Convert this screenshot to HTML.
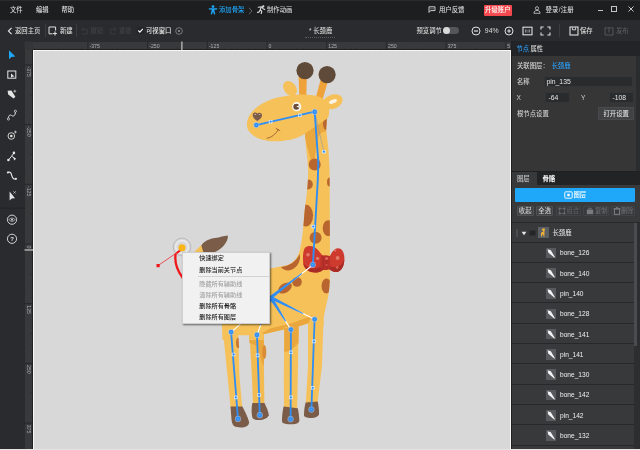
<!DOCTYPE html>
<html lang="zh-CN">
<head>
<meta charset="utf-8">
<title>骨骼动画编辑器</title>
<style>
*{margin:0;padding:0;box-sizing:border-box}
html,body{width:640px;height:450px;overflow:hidden;background:#2b2c2f}
body{position:relative;font-family:"Liberation Sans","Noto Sans CJK SC",sans-serif;font-size:6.350px;line-height:1;color:#e6e6e6;-webkit-text-size-adjust:none}
.a{position:absolute}
.t{position:absolute;white-space:nowrap;line-height:8px;height:8px;font-weight:500}
#menubar{left:0;top:0;width:640px;height:19.500px;background:#1d1e20;border-top:0.700px solid #2a2b2d}
#toolbar{left:0;top:19.500px;width:640px;height:22px;background:#2a2b2e}
#lefttools{left:0;top:41px;width:24.5px;height:409px;background:#2a2b2e}
#canvas{left:33.200px;top:50.300px;width:477.5px;height:400px;background:#d8d8d8;border:1.8px solid #f6f6f6;border-bottom:0;box-shadow:0 0 0 0.6px #151516}
#rulerh{left:24.5px;top:41.5px;width:486px;height:8.5px;background:#38393b}
#rulerv{left:24.5px;top:50px;width:8.5px;height:400px;background:#38393b}
#bottomstrip{left:0;top:449px;width:640px;height:1px;background:#e4e4e4;z-index:50}
#gap{left:510.5px;top:41px;width:2px;height:409px;background:#202123}
#rp{left:512px;top:41px;width:128px;height:409px;background:#363637}
#rphead{left:512px;top:41px;width:128px;height:15px;background:#232427}
.dim{color:#6a6b6e}
.blue{color:#2d9cf0}
.inp{position:absolute;background:#2a2b2d;border:0.5px solid #343538;border-radius:1px}
</style>
</head>
<body>
<div id="app" style="position:absolute;left:0;top:0;width:640px;height:450px;will-change:transform">
<div class="a" id="menubar"></div>
<div class="a" id="toolbar"></div>
<div class="a" id="lefttools"></div>
<div class="a" id="rulerh"></div>
<div class="a" id="rulerv"></div>
<div class="a" id="canvas"></div>
<div class="a" id="gap"></div>
<div class="a" id="rp"></div>
<div class="a" id="rphead"></div>
<div class="t" style="left:10px;top:6.100px;color:#dcdcdc">文件</div>
<div class="t" style="left:36px;top:6.100px;color:#dcdcdc">编辑</div>
<div class="t" style="left:61.5px;top:6.100px;color:#dcdcdc">帮助</div>
<svg class="a" style="left:208px;top:4.5px" width="10" height="10" viewBox="0 0 10 10"><circle cx="5" cy="1.6" r="1.4" fill="#1fa3f5"/><path d="M0.8 3.3 L9.2 3.3 L9.2 4.6 L6.3 4.8 L7.3 9.2 L6 9.4 L5 6.6 L4 9.4 L2.7 9.2 L3.7 4.8 L0.8 4.6 Z" fill="#1fa3f5"/></svg>
<div class="t" style="left:219px;top:6.100px;color:#1fa3f5">添加骨架</div>
<svg class="a" style="left:248px;top:6.5px" width="5" height="8" viewBox="0 0 5 8"><path d="M1 0.8 L4 4 L1 7.2" fill="none" stroke="#6d6e71" stroke-width="0.9"/></svg>
<svg class="a" style="left:256.5px;top:5px" width="9" height="9" viewBox="0 0 9 9"><circle cx="6.3" cy="1.3" r="1.1" fill="#e0e0e0"/><path d="M1.2 2.2 L5 1.8 L6 3.8 L7.8 4.4 M4.2 2.2 L3.2 5 L4.8 6.2 L4.2 8.6 M3.2 5 L1.8 7.2 L0.5 7.4" fill="none" stroke="#e0e0e0" stroke-width="1.1" stroke-linecap="round" stroke-linejoin="round"/></svg>
<div class="t" style="left:267px;top:6.100px;color:#d4d4d4">制作动画</div>
<svg class="a" style="left:427.5px;top:5.5px" width="8" height="8" viewBox="0 0 8 8"><path d="M1 0.8 L7 0.8 L7 4.6 L2.6 4.6 L1 6.4 Z" fill="none" stroke="#e0e0e0" stroke-width="0.9"/><path d="M3 2.2 L3 3.4 M5 2.2 L5 3.4" stroke="#e0e0e0" stroke-width="0.7"/></svg>
<div class="t" style="left:439px;top:6.100px;color:#dcdcdc">用户反馈</div>
<div class="a" style="left:483.5px;top:4.5px;width:28.5px;height:11px;background:#f4494e;border-radius:1px"></div>
<div class="t" style="left:485px;top:6px;color:#fff;font-size:6.4px">升级账户</div>
<svg class="a" style="left:533px;top:5.5px" width="8" height="8" viewBox="0 0 8 8"><circle cx="4" cy="2.3" r="1.6" fill="none" stroke="#d0d0d0" stroke-width="0.8"/><path d="M0.9 7.3 C0.9 5.2 2.4 4.4 4 4.4 C5.6 4.4 7.1 5.2 7.1 7.3 Z" fill="none" stroke="#d0d0d0" stroke-width="0.8"/></svg>
<div class="t" style="left:545.500px;top:6.100px;color:#dcdcdc;letter-spacing:0.250px">登录/注册</div>
<div class="a" style="left:597.500px;top:9.5px;width:5px;height:1px;background:#c4c4c4"></div>
<div class="a" style="left:611px;top:6px;width:6px;height:6px;border:1px solid #c4c4c4"></div>
<svg class="a" style="left:627.5px;top:6px" width="6" height="6" viewBox="0 0 6 6"><path d="M0.5 0.5 L5.5 5.5 M5.5 0.5 L0.5 5.5" stroke="#d8d8d8" stroke-width="0.9"/></svg>
<!--MENUBAR-->
<svg class="a" style="left:7px;top:26.5px" width="6" height="8" viewBox="0 0 6 8"><path d="M4.6 0.8 L1.4 4 L4.6 7.2" fill="none" stroke="#e6e6e6" stroke-width="1.1"/></svg>
<div class="t" style="left:15px;top:27px;color:#dcdcdc">返回主页</div>
<div class="a" style="left:44.5px;top:24px;width:0.5px;height:13px;background:#3c3d40"></div>
<svg class="a" style="left:48px;top:25.5px" width="10" height="10" viewBox="0 0 10 10"><path d="M7.6 4.6 L7.6 1 L1 1 L1 7.8 L4.6 7.8" fill="none" stroke="#e0e0e0" stroke-width="1"/><path d="M7 5.6 L7 9.4 M5.1 7.5 L8.9 7.5" stroke="#e0e0e0" stroke-width="1.1"/></svg>
<div class="t" style="left:60px;top:27px;color:#dcdcdc">新建</div>
<div class="a" style="left:75.5px;top:24px;width:0.5px;height:13px;background:#3c3d40"></div>
<svg class="a" style="left:81px;top:26.5px" width="7" height="8" viewBox="0 0 7 8"><path d="M2.6 0.6 L0.8 2.2 L2.6 3.8 M0.8 2.2 L6.2 2.2 L6.2 7 L0.8 7" fill="none" stroke="#3f4043" stroke-width="0.8"/></svg>
<div class="t dim" style="left:90.5px;top:27px;color:#404144">撤销</div>
<svg class="a" style="left:109.500px;top:26.5px" width="7" height="8" viewBox="0 0 7 8"><path d="M4.400 0.600 L6.200 2.200 L4.400 3.800 M6.200 2.200 L0.800 2.200 L0.800 7 L6.200 7" fill="none" stroke="#3f4043" stroke-width="0.8"/></svg>
<div class="t dim" style="left:119px;top:27px;color:#404144">重做</div>
<div class="a" style="left:136.500px;top:27px;width:7px;height:7px;background:#232427;border-radius:1px"></div>
<svg class="a" style="left:136.500px;top:27px" width="7" height="7" viewBox="0 0 7 7"><path d="M1.300 3.500 L2.900 5.100 L5.800 1.800" fill="none" stroke="#fff" stroke-width="1.100"/></svg>
<div class="t" style="left:146px;top:27px;color:#e6e6e6">可视窗口</div>
<svg class="a" style="left:174.500px;top:26.500px" width="8" height="8" viewBox="0 0 8 8"><circle cx="4" cy="4" r="3.300" fill="none" stroke="#9a9b9e" stroke-width="0.700"/><circle cx="4" cy="4" r="1" fill="#9a9b9e"/></svg>
<div class="t" style="left:309px;top:27px;color:#d8d8d8">* 长颈鹿</div>
<div class="a" style="left:305px;top:36.500px;width:30px;height:0;border-top:1px dotted #5a5b5e"></div>
<div class="t" style="left:416.500px;top:27px;color:#d8d8d8">预览调节</div>
<div class="a" style="left:442.500px;top:27px;width:16.500px;height:7px;border-radius:3.500px;background:#55565a"></div>
<div class="a" style="left:442.500px;top:26.700px;width:7.600px;height:7.600px;border-radius:50%;background:#d9d9d9"></div>
<svg class="a" style="left:470.500px;top:25.500px" width="10" height="10" viewBox="0 0 10 10"><circle cx="5" cy="5" r="4" fill="none" stroke="#e0e0e0" stroke-width="1"/><path d="M3 5 L7 5" stroke="#e0e0e0" stroke-width="1.200"/></svg>
<div class="t" style="left:484.800px;top:27px;color:#dedede;font-size:6.900px">94%</div>
<svg class="a" style="left:503.500px;top:25.500px" width="10" height="10" viewBox="0 0 10 10"><circle cx="5" cy="5" r="4" fill="none" stroke="#e0e0e0" stroke-width="1"/><path d="M3.200 5 L6.800 5 M5 3.200 L5 6.800" stroke="#e0e0e0" stroke-width="1.100"/></svg>
<svg class="a" style="left:521.500px;top:25.500px" width="11" height="10" viewBox="0 0 11 10"><rect x="1" y="1.200" width="9" height="7.600" fill="none" stroke="#e0e0e0" stroke-width="1.100"/><path d="M3.800 3.500 L3.800 6.500 M7.200 3.500 L7.200 6.500" stroke="#e0e0e0" stroke-width="0.800"/><circle cx="5.500" cy="4.200" r="0.350" fill="#e0e0e0"/><circle cx="5.500" cy="5.900" r="0.350" fill="#e0e0e0"/></svg>
<svg class="a" style="left:539.500px;top:25.500px" width="11" height="10" viewBox="0 0 11 10"><path d="M1 3.400 L1 1 L3.600 1 M7.400 1 L10 1 L10 3.400 M10 6.600 L10 9 L7.400 9 M3.600 9 L1 9 L1 6.600" fill="none" stroke="#e0e0e0" stroke-width="1.100"/></svg>
<div class="a" style="left:558.500px;top:24px;width:0.500px;height:13px;background:#3c3d40"></div>
<svg class="a" style="left:568.500px;top:25.500px" width="10" height="10" viewBox="0 0 10 10"><rect x="1" y="1" width="8" height="8" fill="none" stroke="#e0e0e0" stroke-width="1.100"/><path d="M3.400 1.400 L3.400 3.800 L6.600 3.800 L6.600 1.400" fill="none" stroke="#e0e0e0" stroke-width="0.900"/></svg>
<div class="t" style="left:580px;top:27px;color:#dcdcdc">保存</div>
<svg class="a" style="left:603.500px;top:25.500px" width="10" height="10" viewBox="0 0 10 10"><path d="M3.400 1.800 L1 1.800 L1 9 L9 9 L9 1.800 L6.600 1.800" fill="none" stroke="#5a5b5e" stroke-width="0.900"/><path d="M5 6.600 L5 1.200 M3.600 2.600 L5 1.200 L6.400 2.600" fill="none" stroke="#5a5b5e" stroke-width="0.900"/></svg>
<div class="t" style="left:616px;top:27px;color:#58595c">发布</div>
<!--TOOLBAR-->
<svg class="a" style="left:0;top:41px" width="25" height="409" viewBox="0 41 25 409">
<path d="M9 50.200 L9 59.200 L11.400 57 L15.400 56.600 Z" fill="#1fa8f9"/>
<g fill="none" stroke="#e4e4e4" stroke-width="1"><rect x="7.800" y="71" width="8" height="7.200"/></g>
<path d="M11 73.400 L11 77.800 L12.300 76.700 L14.600 76.500 Z" fill="#e4e4e4"/>
<path d="M7.600 90.800 L11.400 90.600 L15.400 96.800 L13.600 98.600 L8.200 94.600 Z" fill="#e4e4e4"/>
<path d="M14.800 89.800 L14.800 92.600 M13.400 91.200 L16.200 91.200" stroke="#e4e4e4" stroke-width="0.700"/>
<path d="M8.400 118.600 C8.400 114.500 10.500 114.800 11.800 115.600 C13.400 116.600 15.400 116 15.400 111.600" fill="none" stroke="#e4e4e4" stroke-width="1"/>
<circle cx="8.400" cy="119" r="1.100" fill="#2a2b2e" stroke="#e4e4e4" stroke-width="0.700"/><circle cx="15.400" cy="111.200" r="1.100" fill="#2a2b2e" stroke="#e4e4e4" stroke-width="0.700"/>
<circle cx="11.300" cy="136" r="3.300" fill="none" stroke="#e4e4e4" stroke-width="0.900"/><circle cx="11.300" cy="136" r="1.300" fill="#e4e4e4"/>
<path d="M15.400 130.600 L15.400 133.400 M14 132 L16.800 132" stroke="#e4e4e4" stroke-width="0.700"/>
<path d="M8.600 159.800 L11.600 156.200 L13.800 153.200 M11.600 156.200 L14.600 158.200" fill="none" stroke="#e4e4e4" stroke-width="1"/>
<circle cx="8.400" cy="160" r="1.300" fill="#e4e4e4"/><circle cx="13.900" cy="152.900" r="1.300" fill="#e4e4e4"/><path d="M13 157.200 L16.200 158.400 L14.400 160.400 Z" fill="#e4e4e4"/>
<path d="M8 172.400 C10.500 171.200 11.200 173.400 11.800 175.600 C12.400 177.800 13.600 179.600 15.800 178.800" fill="none" stroke="#e4e4e4" stroke-width="1.200"/>
<circle cx="7.900" cy="172.500" r="1.100" fill="#e4e4e4"/><circle cx="15.900" cy="178.800" r="1.100" fill="#e4e4e4"/>
<path d="M9.600 191.600 L9.600 200.600 L11.800 198.600 L15 198.300 Z" fill="#e4e4e4"/>
<path d="M13.400 191.200 L15.800 193.600 M15.800 191.200 L13.400 193.600" stroke="#e4e4e4" stroke-width="0.600"/>
<rect x="0" y="207.800" width="25" height="0.600" fill="#1f2022"/>
<circle cx="12" cy="219.700" r="4.600" fill="none" stroke="#e4e4e4" stroke-width="0.900"/>
<path d="M9 219.700 C10.400 217.600 13.600 217.600 15 219.700 C13.600 221.800 10.400 221.800 9 219.700 Z" fill="none" stroke="#e4e4e4" stroke-width="0.700"/><circle cx="12" cy="219.700" r="0.900" fill="#e4e4e4"/>
<circle cx="12" cy="238.800" r="4.600" fill="none" stroke="#e4e4e4" stroke-width="0.900"/>
<text x="12" y="241" text-anchor="middle" font-family="Liberation Sans, sans-serif" font-size="6" font-weight="bold" fill="#e4e4e4">?</text>
</svg>
<!--LEFTTOOLS-->
<svg class="a" style="left:24px;top:41px" width="488" height="409" viewBox="24 41 488 409" font-family="Liberation Sans, sans-serif" font-size="5.200" fill="#adaeb1">
<rect x="24.500" y="41.500" width="8.500" height="8.500" fill="#343537"/>
<path d="M87.9 41.500 L87.9 50" stroke="#1f2022" stroke-width="0.700"/>
<text x="89.5" y="47.600">-375</text>
<path d="M147.6 41.500 L147.6 50" stroke="#1f2022" stroke-width="0.700"/>
<text x="149.2" y="47.600">-250</text>
<path d="M207.3 41.500 L207.3 50" stroke="#1f2022" stroke-width="0.700"/>
<text x="208.9" y="47.600">-125</text>
<path d="M267.0 41.500 L267.0 50" stroke="#1f2022" stroke-width="0.700"/>
<text x="268.6" y="47.600">0</text>
<path d="M326.7 41.500 L326.7 50" stroke="#1f2022" stroke-width="0.700"/>
<text x="328.3" y="47.600">125</text>
<path d="M386.4 41.500 L386.4 50" stroke="#1f2022" stroke-width="0.700"/>
<text x="388.0" y="47.600">250</text>
<path d="M446.1 41.500 L446.1 50" stroke="#1f2022" stroke-width="0.700"/>
<text x="447.7" y="47.600">375</text>
<path d="M34.2 48.6 L34.2 50" stroke="#1f2022" stroke-width="0.500"/>
<path d="M40.1 48.6 L40.1 50" stroke="#1f2022" stroke-width="0.500"/>
<path d="M46.1 48.6 L46.1 50" stroke="#1f2022" stroke-width="0.500"/>
<path d="M52.1 48.6 L52.1 50" stroke="#1f2022" stroke-width="0.500"/>
<path d="M58.0 47.5 L58.0 50" stroke="#1f2022" stroke-width="0.500"/>
<path d="M64.0 48.6 L64.0 50" stroke="#1f2022" stroke-width="0.500"/>
<path d="M70.0 48.6 L70.0 50" stroke="#1f2022" stroke-width="0.500"/>
<path d="M76.0 48.6 L76.0 50" stroke="#1f2022" stroke-width="0.500"/>
<path d="M81.9 48.6 L81.9 50" stroke="#1f2022" stroke-width="0.500"/>
<path d="M93.9 48.6 L93.9 50" stroke="#1f2022" stroke-width="0.500"/>
<path d="M99.8 48.6 L99.8 50" stroke="#1f2022" stroke-width="0.500"/>
<path d="M105.8 48.6 L105.8 50" stroke="#1f2022" stroke-width="0.500"/>
<path d="M111.8 48.6 L111.8 50" stroke="#1f2022" stroke-width="0.500"/>
<path d="M117.8 47.5 L117.8 50" stroke="#1f2022" stroke-width="0.500"/>
<path d="M123.7 48.6 L123.7 50" stroke="#1f2022" stroke-width="0.500"/>
<path d="M129.7 48.6 L129.7 50" stroke="#1f2022" stroke-width="0.500"/>
<path d="M135.7 48.6 L135.7 50" stroke="#1f2022" stroke-width="0.500"/>
<path d="M141.6 48.6 L141.6 50" stroke="#1f2022" stroke-width="0.500"/>
<path d="M153.6 48.6 L153.6 50" stroke="#1f2022" stroke-width="0.500"/>
<path d="M159.5 48.6 L159.5 50" stroke="#1f2022" stroke-width="0.500"/>
<path d="M165.5 48.6 L165.5 50" stroke="#1f2022" stroke-width="0.500"/>
<path d="M171.5 48.6 L171.5 50" stroke="#1f2022" stroke-width="0.500"/>
<path d="M177.4 47.5 L177.4 50" stroke="#1f2022" stroke-width="0.500"/>
<path d="M183.4 48.6 L183.4 50" stroke="#1f2022" stroke-width="0.500"/>
<path d="M189.4 48.6 L189.4 50" stroke="#1f2022" stroke-width="0.500"/>
<path d="M195.4 48.6 L195.4 50" stroke="#1f2022" stroke-width="0.500"/>
<path d="M201.3 48.6 L201.3 50" stroke="#1f2022" stroke-width="0.500"/>
<path d="M213.3 48.6 L213.3 50" stroke="#1f2022" stroke-width="0.500"/>
<path d="M219.2 48.6 L219.2 50" stroke="#1f2022" stroke-width="0.500"/>
<path d="M225.2 48.6 L225.2 50" stroke="#1f2022" stroke-width="0.500"/>
<path d="M231.2 48.6 L231.2 50" stroke="#1f2022" stroke-width="0.500"/>
<path d="M237.2 47.5 L237.2 50" stroke="#1f2022" stroke-width="0.500"/>
<path d="M243.1 48.6 L243.1 50" stroke="#1f2022" stroke-width="0.500"/>
<path d="M249.1 48.6 L249.1 50" stroke="#1f2022" stroke-width="0.500"/>
<path d="M255.1 48.6 L255.1 50" stroke="#1f2022" stroke-width="0.500"/>
<path d="M261.0 48.6 L261.0 50" stroke="#1f2022" stroke-width="0.500"/>
<path d="M273.0 48.6 L273.0 50" stroke="#1f2022" stroke-width="0.500"/>
<path d="M278.9 48.6 L278.9 50" stroke="#1f2022" stroke-width="0.500"/>
<path d="M284.9 48.6 L284.9 50" stroke="#1f2022" stroke-width="0.500"/>
<path d="M290.9 48.6 L290.9 50" stroke="#1f2022" stroke-width="0.500"/>
<path d="M296.9 47.5 L296.9 50" stroke="#1f2022" stroke-width="0.500"/>
<path d="M302.8 48.6 L302.8 50" stroke="#1f2022" stroke-width="0.500"/>
<path d="M308.8 48.6 L308.8 50" stroke="#1f2022" stroke-width="0.500"/>
<path d="M314.8 48.6 L314.8 50" stroke="#1f2022" stroke-width="0.500"/>
<path d="M320.7 48.6 L320.7 50" stroke="#1f2022" stroke-width="0.500"/>
<path d="M332.7 48.6 L332.7 50" stroke="#1f2022" stroke-width="0.500"/>
<path d="M338.6 48.6 L338.6 50" stroke="#1f2022" stroke-width="0.500"/>
<path d="M344.6 48.6 L344.6 50" stroke="#1f2022" stroke-width="0.500"/>
<path d="M350.6 48.6 L350.6 50" stroke="#1f2022" stroke-width="0.500"/>
<path d="M356.6 47.5 L356.6 50" stroke="#1f2022" stroke-width="0.500"/>
<path d="M362.5 48.6 L362.5 50" stroke="#1f2022" stroke-width="0.500"/>
<path d="M368.5 48.6 L368.5 50" stroke="#1f2022" stroke-width="0.500"/>
<path d="M374.5 48.6 L374.5 50" stroke="#1f2022" stroke-width="0.500"/>
<path d="M380.4 48.6 L380.4 50" stroke="#1f2022" stroke-width="0.500"/>
<path d="M392.4 48.6 L392.4 50" stroke="#1f2022" stroke-width="0.500"/>
<path d="M398.3 48.6 L398.3 50" stroke="#1f2022" stroke-width="0.500"/>
<path d="M404.3 48.6 L404.3 50" stroke="#1f2022" stroke-width="0.500"/>
<path d="M410.3 48.6 L410.3 50" stroke="#1f2022" stroke-width="0.500"/>
<path d="M416.2 47.5 L416.2 50" stroke="#1f2022" stroke-width="0.500"/>
<path d="M422.2 48.6 L422.2 50" stroke="#1f2022" stroke-width="0.500"/>
<path d="M428.2 48.6 L428.2 50" stroke="#1f2022" stroke-width="0.500"/>
<path d="M434.2 48.6 L434.2 50" stroke="#1f2022" stroke-width="0.500"/>
<path d="M440.1 48.6 L440.1 50" stroke="#1f2022" stroke-width="0.500"/>
<path d="M452.1 48.6 L452.1 50" stroke="#1f2022" stroke-width="0.500"/>
<path d="M458.0 48.6 L458.0 50" stroke="#1f2022" stroke-width="0.500"/>
<path d="M464.0 48.6 L464.0 50" stroke="#1f2022" stroke-width="0.500"/>
<path d="M470.0 48.6 L470.0 50" stroke="#1f2022" stroke-width="0.500"/>
<path d="M475.9 47.5 L475.9 50" stroke="#1f2022" stroke-width="0.500"/>
<path d="M481.9 48.6 L481.9 50" stroke="#1f2022" stroke-width="0.500"/>
<path d="M487.9 48.6 L487.9 50" stroke="#1f2022" stroke-width="0.500"/>
<path d="M493.9 48.6 L493.9 50" stroke="#1f2022" stroke-width="0.500"/>
<path d="M499.8 48.6 L499.8 50" stroke="#1f2022" stroke-width="0.500"/>
<path d="M505.8 41.500 L505.8 50" stroke="#1f2022" stroke-width="0.700"/>
<text x="507.2" y="47.600">5</text>
<rect x="181.300" y="41.500" width="1.200" height="8.500" fill="#c8c8c8"/>
<path d="M24.500 64.9 L33 64.9" stroke="#1f2022" stroke-width="0.700"/>
<text transform="translate(26.800 66.5) rotate(90)">-375</text>
<path d="M24.500 124.6 L33 124.6" stroke="#1f2022" stroke-width="0.700"/>
<text transform="translate(26.800 126.2) rotate(90)">-250</text>
<path d="M24.500 184.3 L33 184.3" stroke="#1f2022" stroke-width="0.700"/>
<text transform="translate(26.800 185.9) rotate(90)">-125</text>
<path d="M24.500 244.0 L33 244.0" stroke="#1f2022" stroke-width="0.700"/>
<text transform="translate(26.800 245.6) rotate(90)">0</text>
<path d="M24.500 303.7 L33 303.7" stroke="#1f2022" stroke-width="0.700"/>
<text transform="translate(26.800 305.3) rotate(90)">125</text>
<path d="M24.500 363.4 L33 363.4" stroke="#1f2022" stroke-width="0.700"/>
<text transform="translate(26.800 365.0) rotate(90)">250</text>
<path d="M24.500 423.1 L33 423.1" stroke="#1f2022" stroke-width="0.700"/>
<text transform="translate(26.800 424.7) rotate(90)">375</text>
<path d="M31.6 53.0 L33 53.0" stroke="#1f2022" stroke-width="0.500"/>
<path d="M31.6 58.9 L33 58.9" stroke="#1f2022" stroke-width="0.500"/>
<path d="M31.6 70.9 L33 70.9" stroke="#1f2022" stroke-width="0.500"/>
<path d="M31.6 76.8 L33 76.8" stroke="#1f2022" stroke-width="0.500"/>
<path d="M31.6 82.8 L33 82.8" stroke="#1f2022" stroke-width="0.500"/>
<path d="M31.6 88.8 L33 88.8" stroke="#1f2022" stroke-width="0.500"/>
<path d="M30.5 94.8 L33 94.8" stroke="#1f2022" stroke-width="0.500"/>
<path d="M31.6 100.7 L33 100.7" stroke="#1f2022" stroke-width="0.500"/>
<path d="M31.6 106.7 L33 106.7" stroke="#1f2022" stroke-width="0.500"/>
<path d="M31.6 112.7 L33 112.7" stroke="#1f2022" stroke-width="0.500"/>
<path d="M31.6 118.6 L33 118.6" stroke="#1f2022" stroke-width="0.500"/>
<path d="M31.6 130.6 L33 130.6" stroke="#1f2022" stroke-width="0.500"/>
<path d="M31.6 136.5 L33 136.5" stroke="#1f2022" stroke-width="0.500"/>
<path d="M31.6 142.5 L33 142.5" stroke="#1f2022" stroke-width="0.500"/>
<path d="M31.6 148.5 L33 148.5" stroke="#1f2022" stroke-width="0.500"/>
<path d="M30.5 154.4 L33 154.4" stroke="#1f2022" stroke-width="0.500"/>
<path d="M31.6 160.4 L33 160.4" stroke="#1f2022" stroke-width="0.500"/>
<path d="M31.6 166.4 L33 166.4" stroke="#1f2022" stroke-width="0.500"/>
<path d="M31.6 172.4 L33 172.4" stroke="#1f2022" stroke-width="0.500"/>
<path d="M31.6 178.3 L33 178.3" stroke="#1f2022" stroke-width="0.500"/>
<path d="M31.6 190.3 L33 190.3" stroke="#1f2022" stroke-width="0.500"/>
<path d="M31.6 196.2 L33 196.2" stroke="#1f2022" stroke-width="0.500"/>
<path d="M31.6 202.2 L33 202.2" stroke="#1f2022" stroke-width="0.500"/>
<path d="M31.6 208.2 L33 208.2" stroke="#1f2022" stroke-width="0.500"/>
<path d="M30.5 214.2 L33 214.2" stroke="#1f2022" stroke-width="0.500"/>
<path d="M31.6 220.1 L33 220.1" stroke="#1f2022" stroke-width="0.500"/>
<path d="M31.6 226.1 L33 226.1" stroke="#1f2022" stroke-width="0.500"/>
<path d="M31.6 232.1 L33 232.1" stroke="#1f2022" stroke-width="0.500"/>
<path d="M31.6 238.0 L33 238.0" stroke="#1f2022" stroke-width="0.500"/>
<path d="M31.6 250.0 L33 250.0" stroke="#1f2022" stroke-width="0.500"/>
<path d="M31.6 255.9 L33 255.9" stroke="#1f2022" stroke-width="0.500"/>
<path d="M31.6 261.9 L33 261.9" stroke="#1f2022" stroke-width="0.500"/>
<path d="M31.6 267.9 L33 267.9" stroke="#1f2022" stroke-width="0.500"/>
<path d="M30.5 273.9 L33 273.9" stroke="#1f2022" stroke-width="0.500"/>
<path d="M31.6 279.8 L33 279.8" stroke="#1f2022" stroke-width="0.500"/>
<path d="M31.6 285.8 L33 285.8" stroke="#1f2022" stroke-width="0.500"/>
<path d="M31.6 291.8 L33 291.8" stroke="#1f2022" stroke-width="0.500"/>
<path d="M31.6 297.7 L33 297.7" stroke="#1f2022" stroke-width="0.500"/>
<path d="M31.6 309.7 L33 309.7" stroke="#1f2022" stroke-width="0.500"/>
<path d="M31.6 315.6 L33 315.6" stroke="#1f2022" stroke-width="0.500"/>
<path d="M31.6 321.6 L33 321.6" stroke="#1f2022" stroke-width="0.500"/>
<path d="M31.6 327.6 L33 327.6" stroke="#1f2022" stroke-width="0.500"/>
<path d="M30.5 333.6 L33 333.6" stroke="#1f2022" stroke-width="0.500"/>
<path d="M31.6 339.5 L33 339.5" stroke="#1f2022" stroke-width="0.500"/>
<path d="M31.6 345.5 L33 345.5" stroke="#1f2022" stroke-width="0.500"/>
<path d="M31.6 351.5 L33 351.5" stroke="#1f2022" stroke-width="0.500"/>
<path d="M31.6 357.4 L33 357.4" stroke="#1f2022" stroke-width="0.500"/>
<path d="M31.6 369.4 L33 369.4" stroke="#1f2022" stroke-width="0.500"/>
<path d="M31.6 375.3 L33 375.3" stroke="#1f2022" stroke-width="0.500"/>
<path d="M31.6 381.3 L33 381.3" stroke="#1f2022" stroke-width="0.500"/>
<path d="M31.6 387.3 L33 387.3" stroke="#1f2022" stroke-width="0.500"/>
<path d="M30.5 393.2 L33 393.2" stroke="#1f2022" stroke-width="0.500"/>
<path d="M31.6 399.2 L33 399.2" stroke="#1f2022" stroke-width="0.500"/>
<path d="M31.6 405.2 L33 405.2" stroke="#1f2022" stroke-width="0.500"/>
<path d="M31.6 411.2 L33 411.2" stroke="#1f2022" stroke-width="0.500"/>
<path d="M31.6 417.1 L33 417.1" stroke="#1f2022" stroke-width="0.500"/>
<path d="M31.6 429.1 L33 429.1" stroke="#1f2022" stroke-width="0.500"/>
<path d="M31.6 435.0 L33 435.0" stroke="#1f2022" stroke-width="0.500"/>
<path d="M31.6 441.0 L33 441.0" stroke="#1f2022" stroke-width="0.500"/>
<path d="M31.6 447.0 L33 447.0" stroke="#1f2022" stroke-width="0.500"/>
<rect x="24.500" y="249.400" width="8.500" height="1.200" fill="#c8c8c8"/>
</svg>
<!--RULERS-->
<div class="t" style="left:516.500px;top:45px;color:#2d9cf0">节点</div>
<div class="t" style="left:530.500px;top:45px;color:#d8d8d8">属性</div>
<div class="a" style="left:635.500px;top:56px;width:0.600px;height:115px;background:#242527"></div>
<div class="a" style="left:636px;top:56px;width:4px;height:115px;background:#2b2c2e"></div>
<div class="t" style="left:517px;top:62px;color:#d0d0d0">关联图层：</div>
<div class="t" style="left:551.500px;top:62px;color:#2d9cf0">长颈鹿</div>
<div class="t" style="left:517px;top:77.500px;color:#d0d0d0">名称</div>
<div class="inp" style="left:543.500px;top:76px;width:89px;height:10.500px"></div>
<div class="t" style="left:546.500px;top:77.500px;color:#e6e6e6;font-size:6.800px">pin_135</div>
<div class="t" style="left:516.500px;top:93.500px;color:#d0d0d0;font-size:6.600px">X</div>
<div class="inp" style="left:544.500px;top:92px;width:25px;height:10.500px"></div>
<div class="t" style="left:548.500px;top:93.500px;color:#e6e6e6;font-size:6.800px">-64</div>
<div class="t" style="left:581px;top:93.500px;color:#d0d0d0;font-size:6.600px">Y</div>
<div class="inp" style="left:608.500px;top:92px;width:25px;height:10.500px"></div>
<div class="t" style="left:612.500px;top:93.500px;color:#e6e6e6;font-size:6.800px">-108</div>
<div class="t" style="left:517px;top:109.500px;color:#d0d0d0">根节点设置</div>
<div class="a" style="left:597.500px;top:107px;width:36.500px;height:13px;background:#414244;border:0.500px solid #4a4b4e;border-radius:1px"></div>
<div class="t" style="left:603.500px;top:109.500px;color:#e0e0e0">打开设置</div>
<div class="a" style="left:512px;top:171px;width:128px;height:1px;background:#1f2022"></div>
<div class="a" style="left:512px;top:172px;width:128px;height:13px;background:#222325"></div>
<div class="a" style="left:512px;top:172px;width:24.500px;height:13px;background:#38393b"></div>
<div class="t" style="left:517px;top:175px;color:#c4c4c4">图层</div>
<div class="t" style="left:542.500px;top:175px;color:#fff;font-weight:bold">骨骼</div>
<div class="a" style="left:512px;top:185px;width:128px;height:265px;background:#38393b"></div>
<div class="a" style="left:515px;top:188px;width:120px;height:14px;background:#1fa8f9;border-radius:1px"></div>
<svg class="a" style="left:564px;top:191px" width="9" height="8" viewBox="0 0 9 8"><rect x="0.800" y="0.800" width="7.400" height="6.400" rx="0.800" fill="none" stroke="#fff" stroke-width="0.900"/><rect x="3.300" y="2.800" width="2.400" height="2.400" fill="#fff"/></svg>
<div class="t" style="left:573.500px;top:191px;color:#fff">图层</div>
<div class="a" style="left:516.500px;top:205.500px;width:17px;height:10.500px;background:#404143;border:0.500px solid #505154;border-radius:1px"></div>
<div class="t" style="left:518.800px;top:206.800px;color:#d0d0d0">收起</div>
<div class="a" style="left:536px;top:205.500px;width:17px;height:10.500px;background:#404143;border:0.500px solid #505154;border-radius:1px"></div>
<div class="t" style="left:538.300px;top:206.800px;color:#d0d0d0">全选</div>
<svg class="a" style="left:558px;top:207px" width="8" height="8" viewBox="0 0 8 8"><rect x="0.600" y="0.600" width="2" height="2" fill="#6c6d70"/><rect x="5.400" y="0.600" width="2" height="2" fill="#6c6d70"/><rect x="0.600" y="5.400" width="2" height="2" fill="#6c6d70"/><rect x="5.400" y="5.400" width="2" height="2" fill="#6c6d70"/><rect x="1.600" y="1.600" width="4.800" height="4.800" fill="none" stroke="#6c6d70" stroke-width="0.600"/></svg>
<div class="t" style="left:566.500px;top:206.800px;color:#5e5f62">组合</div>
<div class="a" style="left:555.500px;top:205.500px;width:25px;height:10.500px;border:0.500px solid #424346;border-radius:1px"></div>
<svg class="a" style="left:586px;top:207px" width="8" height="8" viewBox="0 0 8 8"><rect x="0.800" y="2.600" width="6.400" height="4.600" fill="#7a7b7e"/><path d="M2.800 2.600 L2.800 1.200 L5.200 1.200 L5.200 2.600" fill="none" stroke="#7a7b7e" stroke-width="0.800"/></svg>
<div class="t" style="left:595px;top:206.800px;color:#6a6b6e">复制</div>
<div class="a" style="left:583px;top:205.500px;width:26px;height:10.500px;border:0.500px solid #424346;border-radius:1px"></div>
<svg class="a" style="left:612.500px;top:207px" width="8" height="8" viewBox="0 0 8 8"><rect x="1.400" y="2" width="5.200" height="5.400" fill="none" stroke="#7a7b7e" stroke-width="1.100"/><path d="M0.600 1.600 L7.400 1.600 M3 0.600 L5 0.600" stroke="#7a7b7e" stroke-width="0.900"/></svg>
<div class="t" style="left:621px;top:206.800px;color:#6a6b6e">删除</div>
<div class="a" style="left:611px;top:205.500px;width:24px;height:10.500px;border:0.500px solid #424346;border-radius:1px"></div>
<div class="a" style="left:512px;top:222px;width:128px;height:0.800px;background:#27282a"></div>
<div class="a" style="left:633.500px;top:222.800px;width:6.500px;height:228px;background:#2d2e30"></div>
<div class="a" style="left:633.500px;top:222.800px;width:3.500px;height:123px;background:#4b4c4f"></div>
<div class="a" style="left:516px;top:228.500px;width:1.600px;height:8px;background:#4a4b4e"></div>
<svg class="a" style="left:521px;top:230.500px" width="6" height="5" viewBox="0 0 6 5"><path d="M0.600 0.800 L5.400 0.800 L3 4.200 Z" fill="#e6e6e6"/></svg>
<div class="a" style="left:529px;top:229.500px;width:6.500px;height:6.500px;background:#242527;border:0.500px solid #303133"></div>
<div class="a" style="left:538px;top:227px;width:10.500px;height:11px;background:#5a5f66"></div>
<svg class="a" style="left:538px;top:227px" width="10.500" height="11" viewBox="0 0 10.500 11"><path d="M5.200 1.400 C7 1 7.400 2.400 6.600 3.200 L6.400 6.600 L6.400 9.600 L5.400 9.600 L5.200 7.400 L4 7.400 L4 9.600 L3 9.600 L3 6 C3.200 5.200 4.600 5.400 5 5 L5.200 3.600 L3.800 3.400 C3.600 2.400 4.200 1.600 5.200 1.400 Z" fill="#f2b134"/></svg>
<div class="t" style="left:552.500px;top:229px;color:#d8d8d8">长颈鹿</div>
<div class="a" style="left:512px;top:241.5px;width:121.500px;height:0.900px;background:#27282a"></div>
<div class="a" style="left:545.500px;top:247.6px;width:10.500px;height:10.500px;background:#58595c"></div>
<svg class="a" style="left:545.500px;top:247.6px" width="10.500" height="10.500" viewBox="0 0 10.500 10.500"><path d="M1.600 1.200 L4.800 2.200 L9 9.200 L8.200 9.600 L2.200 4.400 Z" fill="#f4f4f4"/></svg>
<div class="t" style="left:560px;top:249.3px;color:#f0f0f0;font-size:6.600px">bone_126</div>
<div class="a" style="left:512px;top:261.8px;width:121.500px;height:0.900px;background:#27282a"></div>
<div class="a" style="left:545.500px;top:267.9px;width:10.500px;height:10.500px;background:#58595c"></div>
<svg class="a" style="left:545.500px;top:267.9px" width="10.500" height="10.500" viewBox="0 0 10.500 10.500"><path d="M1.600 1.200 L4.800 2.200 L9 9.200 L8.200 9.600 L2.200 4.400 Z" fill="#f4f4f4"/></svg>
<div class="t" style="left:560px;top:269.6px;color:#f0f0f0;font-size:6.600px">bone_140</div>
<div class="a" style="left:512px;top:282.1px;width:121.500px;height:0.900px;background:#27282a"></div>
<div class="a" style="left:545.500px;top:288.2px;width:10.500px;height:10.500px;background:#58595c"></div>
<svg class="a" style="left:545.500px;top:288.2px" width="10.500" height="10.500" viewBox="0 0 10.500 10.500"><path d="M1.600 1.200 L4.800 2.200 L9 9.200 L8.200 9.600 L2.200 4.400 Z" fill="#f4f4f4"/></svg>
<div class="t" style="left:560px;top:289.9px;color:#f0f0f0;font-size:6.600px">pin_140</div>
<div class="a" style="left:512px;top:302.4px;width:121.500px;height:0.900px;background:#27282a"></div>
<div class="a" style="left:545.500px;top:308.5px;width:10.500px;height:10.500px;background:#58595c"></div>
<svg class="a" style="left:545.500px;top:308.5px" width="10.500" height="10.500" viewBox="0 0 10.500 10.500"><path d="M1.600 1.200 L4.800 2.200 L9 9.200 L8.200 9.600 L2.200 4.400 Z" fill="#f4f4f4"/></svg>
<div class="t" style="left:560px;top:310.2px;color:#f0f0f0;font-size:6.600px">bone_128</div>
<div class="a" style="left:512px;top:322.7px;width:121.500px;height:0.900px;background:#27282a"></div>
<div class="a" style="left:545.500px;top:328.8px;width:10.500px;height:10.500px;background:#58595c"></div>
<svg class="a" style="left:545.500px;top:328.8px" width="10.500" height="10.500" viewBox="0 0 10.500 10.500"><path d="M1.600 1.200 L4.800 2.200 L9 9.200 L8.200 9.600 L2.200 4.400 Z" fill="#f4f4f4"/></svg>
<div class="t" style="left:560px;top:330.5px;color:#f0f0f0;font-size:6.600px">bone_141</div>
<div class="a" style="left:512px;top:343.0px;width:121.500px;height:0.900px;background:#27282a"></div>
<div class="a" style="left:545.500px;top:349.1px;width:10.500px;height:10.500px;background:#58595c"></div>
<svg class="a" style="left:545.500px;top:349.1px" width="10.500" height="10.500" viewBox="0 0 10.500 10.500"><path d="M1.600 1.200 L4.800 2.200 L9 9.200 L8.200 9.600 L2.200 4.400 Z" fill="#f4f4f4"/></svg>
<div class="t" style="left:560px;top:350.8px;color:#f0f0f0;font-size:6.600px">pin_141</div>
<div class="a" style="left:512px;top:363.3px;width:121.500px;height:0.900px;background:#27282a"></div>
<div class="a" style="left:545.500px;top:369.4px;width:10.500px;height:10.500px;background:#58595c"></div>
<svg class="a" style="left:545.500px;top:369.4px" width="10.500" height="10.500" viewBox="0 0 10.500 10.500"><path d="M1.600 1.200 L4.800 2.200 L9 9.200 L8.200 9.600 L2.200 4.400 Z" fill="#f4f4f4"/></svg>
<div class="t" style="left:560px;top:371.1px;color:#f0f0f0;font-size:6.600px">bone_130</div>
<div class="a" style="left:512px;top:383.6px;width:121.500px;height:0.900px;background:#27282a"></div>
<div class="a" style="left:545.500px;top:389.7px;width:10.500px;height:10.500px;background:#58595c"></div>
<svg class="a" style="left:545.500px;top:389.7px" width="10.500" height="10.500" viewBox="0 0 10.500 10.500"><path d="M1.600 1.200 L4.800 2.200 L9 9.200 L8.200 9.600 L2.200 4.400 Z" fill="#f4f4f4"/></svg>
<div class="t" style="left:560px;top:391.4px;color:#f0f0f0;font-size:6.600px">bone_142</div>
<div class="a" style="left:512px;top:403.9px;width:121.500px;height:0.900px;background:#27282a"></div>
<div class="a" style="left:545.500px;top:410.0px;width:10.500px;height:10.500px;background:#58595c"></div>
<svg class="a" style="left:545.500px;top:410.0px" width="10.500" height="10.500" viewBox="0 0 10.500 10.500"><path d="M1.600 1.200 L4.800 2.200 L9 9.200 L8.200 9.600 L2.200 4.400 Z" fill="#f4f4f4"/></svg>
<div class="t" style="left:560px;top:411.7px;color:#f0f0f0;font-size:6.600px">pin_142</div>
<div class="a" style="left:512px;top:424.2px;width:121.500px;height:0.900px;background:#27282a"></div>
<div class="a" style="left:545.500px;top:430.3px;width:10.500px;height:10.500px;background:#58595c"></div>
<svg class="a" style="left:545.500px;top:430.3px" width="10.500" height="10.500" viewBox="0 0 10.500 10.500"><path d="M1.600 1.200 L4.800 2.200 L9 9.200 L8.200 9.600 L2.200 4.400 Z" fill="#f4f4f4"/></svg>
<div class="t" style="left:560px;top:432.0px;color:#f0f0f0;font-size:6.600px">bone_132</div>
<div class="a" style="left:512px;top:444.5px;width:121.500px;height:0.900px;background:#27282a"></div>
<!--RIGHTPANEL-->
<svg class="a" style="left:33px;top:50px" width="477.500" height="400" viewBox="33 50 477.500 400">
<defs><clipPath id="neckclip"><path id="neckshape" d="M304.500 126 L305 135 C306 150 308 160 308.200 172 C308 190 305 205 304.200 216 C303.200 230 302 240 300.500 247 C299 256 295 262 288 265 L288 270 L330 270 L330 262 L329.600 170 L328.500 150 L326.200 130 L327 116 Z"/></clipPath>
<clipPath id="bodyclip"><path id="bodyshape" d="M330 262 L330 272 C330 284 329 296 326 306 L323.600 318 L323.600 326 L308 326 L308 323.500 L298.600 326.500 L298.600 334 L284.300 334 L284.300 329.500 L263.750 334.200 L263.750 340 L249.400 340 L249.400 335.200 L238 335.200 L238 340 L222.500 340 L221 300 C220.500 286 226 275 236 271 C250 266.500 262 269.500 270 268.500 L288 265 C296 262 300 255 301 246 Z"/></clipPath></defs>
<!-- tail -->
<path d="M224 282 C213 273 204 262 199 249 L203 246.500 C208 258 217 268 229 275 Z" fill="#f6c158"/>
<path d="M194.500 251.500 L201.800 244.800 L204 249 L200 252.500 Z" fill="#f6c158"/>
<path d="M201.400 245.400 C204 241 210 238.800 215 238 C220 237.200 224 235.600 227.600 235.400 C228.600 238 226.500 242.500 223 246.500 C217 252.500 208 255 203.600 252.500 C202.600 250 202 247.500 201.400 245.400 Z" fill="#7b5c48"/>
<!-- far legs -->
<path d="M249.400 333 L263.750 333 L264 376 L264.400 403.500 L253 403.500 L251.900 376 Z" fill="#f3ba50"/>
<path d="M249.400 334 L263.750 334 L264 366 C261 362 258.500 352 257.500 346 L249.400 343 Z" fill="#eaa73d"/>
<ellipse cx="264.300" cy="352" rx="2" ry="7" fill="#d98c35"/>
<path d="M252.300 402.900 L264.500 402.900 C266.500 407 268.500 411.500 268.800 415.200 C267.500 418 264 419.600 261 420 C258 420.300 254.500 420 252.800 418.500 C251.300 415 251.300 408 252.300 402.900 Z" fill="#7b5c48"/>
<path d="M308 316 L323.600 316 L322 366 L317.500 403 L305.800 403 L308 366 Z" fill="#f6c158"/>
<path d="M305.600 402.400 L317.700 401.600 C318.600 406 319.200 410 319 414.500 C318 417 315 417.800 312 418 C309 418.100 305.500 417.600 304 416 C304 411 304.600 406 305.600 402.400 Z" fill="#7b5c48"/>
<!-- body -->
<path d="M330 262 L330 272 C330 284 329 296 326 306 L323.600 318 L323.600 326 L308 326 L308 323.500 L298.600 326.500 L298.600 334 L284.300 334 L284.300 329.500 L263.750 334.200 L263.750 340 L249.400 340 L249.400 335.200 L238 335.200 L238 340 L222.500 340 L221 300 C220.500 286 226 275 236 271 C250 266.500 262 269.500 270 268.500 L288 265 C296 262 300 255 301 246 Z" fill="#f6c158"/>
<g clip-path="url(#bodyclip)">
<path d="M263.750 334.200 L284.300 329.500 L298.600 326.500 L308 323.500 L312.500 315.500 L291 323.500 L270 328.500 L262 333 Z" fill="#eaa73d"/>
<ellipse cx="285" cy="288" rx="7.500" ry="4.600" transform="rotate(-32 285 288)" fill="#b8652f"/>
<circle cx="297" cy="282" r="4.800" fill="#b8652f"/>
<ellipse cx="326.500" cy="286" rx="5" ry="7.500" fill="#b8652f"/>
<ellipse cx="248" cy="290" rx="6" ry="5" fill="#b8652f"/>
<ellipse cx="234" cy="308" rx="5" ry="6" fill="#b8652f"/>
</g>
<!-- near legs -->
<path d="M222.500 326 L238 326 L239.400 376 L242.250 407.500 L230.600 407.500 L227.500 376 Z" fill="#f6c158"/>
<ellipse cx="238.600" cy="343" rx="2.600" ry="5.200" fill="#c9792f"/>
<path d="M238.600 337 L242 337 L242 350 L239.200 350 Z" fill="#d9d9d9"/>
<path d="M230.500 406.600 L242.400 406.600 C244.500 411 248 417 249.200 422.500 C248.800 425.500 246.500 426.800 244 427.200 C240.500 427.700 236.500 427.400 234 426 C232 424.500 231.600 421 231.300 417 Z" fill="#7b5c48"/>
<path d="M284.300 327 L298.600 327 L297.800 376 L297.200 408.500 L284 408.500 L283.800 376 Z" fill="#f6c158"/>
<path d="M284.300 328 L298.600 325 L298.600 343 L290 351 L284.200 352 Z" fill="#eaa73d"/>
<path d="M283.600 406.600 L297.800 408.200 C298.600 412 299.300 417 299.400 421 C298.500 423.300 296 424 293 424.200 C289.500 424.400 285 424.200 282.800 423 C281.800 421.500 281.900 420 282 418.500 C282.300 414 282.800 410 283.600 406.600 Z" fill="#7b5c48"/>
<!-- neck -->
<path d="M304.500 126 L305 135 C306 150 308 160 308.200 172 C308 190 305 205 304.200 216 C303.200 230 302 240 300.500 247 C299 256 295 262 288 265 L288 270 L330 270 L330 262 L329.600 170 L328.500 150 L326.200 130 L327 116 Z" fill="#f6c158"/>
<g clip-path="url(#neckclip)">
<path d="M304.500 128 L327 116 L326 132 C322 131 319 134 317.500 140 L313 168 C311 160 308 150 305 138 Z" fill="#eaa73d"/>
<circle cx="314.700" cy="164.400" r="6" fill="#b8652f"/>
<ellipse cx="326.500" cy="124" rx="3.500" ry="6" fill="#b8652f"/>
<circle cx="307.800" cy="184.400" r="5" fill="#b8652f"/>
<ellipse cx="330" cy="182" rx="3" ry="4.500" fill="#b8652f"/>
<ellipse cx="305.600" cy="215.600" rx="7.500" ry="11" fill="#b8652f"/>
<ellipse cx="328.200" cy="228.200" rx="5.500" ry="8" fill="#b8652f"/>
<circle cx="315.600" cy="237.800" r="6" fill="#b8652f"/>
</g>
<path d="M281 267 C289 266 296 262 299.800 254 C301 260 298 267.500 291 270 C287 271 283 270 281 267 Z" fill="#b8652f"/>
<!-- horns -->
<path d="M298.600 76 L306.900 76 L306.300 95 L299.200 95 Z" fill="#f0a23a"/>
<path d="M320.500 80 L327.400 83 L322.800 99 L316 97 Z" fill="#f0a23a"/>
<circle cx="305" cy="70.600" r="8.600" fill="#5f4a39"/>
<circle cx="327.100" cy="74.600" r="8.600" fill="#5f4a39"/>
<!-- ears -->
<ellipse cx="290" cy="88.500" rx="6" ry="8.200" transform="rotate(-38 290 88.500)" fill="#f6c158"/>
<ellipse cx="332.500" cy="101.800" rx="10.500" ry="7" transform="rotate(-20 332.500 101.800)" fill="#f6c158"/>
<ellipse cx="333" cy="101.500" rx="4.200" ry="1.900" transform="rotate(-22 333 101.500)" fill="#fbf3e6"/>
<!-- head -->
<path d="M283 96.500 C272 98 258 104 251 113 C246 120 245.500 128 250 132.500 C256 139.500 268 142 278 141.200 C290 140.600 300 138 306.500 132.500 L328 118 C331 110 328 101 321 97.500 C312 93.500 295 94 283 96.500 Z" fill="#f6c158"/>
<circle cx="296.700" cy="106.700" r="4.600" fill="#fdfaf4"/>
<circle cx="296.300" cy="106.700" r="3" fill="#6b4a38"/>
<path d="M296.300 106.600 L299.200 105.200 L299.200 107.800 Z" fill="#fdfaf4"/>
<path d="M257.300 121 C254.500 119.500 252.300 116.800 252.800 114.400 C253.300 112.400 255.800 112 257.400 113.400 C259 112.200 261.600 112.800 262 114.800 C262.400 117.400 260 119.800 257.300 121 Z" fill="#7b5b4a"/>
<ellipse cx="255.300" cy="114.300" rx="1.100" ry="0.600" fill="#c9b5a8"/><ellipse cx="259.600" cy="114.500" rx="0.900" ry="0.500" fill="#c9b5a8"/>
<path d="M267 138.200 C271.500 137.600 276 134 278.200 129.600 M276.200 128.600 L279.800 130.600" fill="none" stroke="#9a5f33" stroke-width="0.900" stroke-linecap="round"/>
<g>
<path d="M305.200 247.600 C308 244.800 313.500 245.600 317 249 C319.500 251.500 321.500 254.500 323.500 256 L330 256 C331.500 252.500 334 248.500 338 248.200 C342.500 248.200 344.600 253 344.400 259.500 C344.200 265.500 342 270.800 337.500 271.900 C333.500 272.600 331 270.500 329 269 L324 269.500 C322 270.500 320.500 272 317 272.400 C310.500 273.200 304.400 270 303.300 264 C302.600 258 302.800 250.500 305.200 247.600 Z" fill="#cf3a2f"/>
<path d="M303.300 263 C306 267.500 312 269.800 318 267.800 C320.500 267 322.500 265.800 324.500 265.800 L329 265.500 C331.500 267.500 336 268 340 265.500 C342 264 343.600 261.500 344.300 259.500 C344.200 265.500 342 270.800 337.500 271.900 C333.500 272.600 331 270.500 329 269 L324 269.500 C322 270.500 320.500 272 317 272.400 C310.500 273.200 304.400 270 303.300 263 Z" fill="#a92b26"/>
<path d="M321 256 C323.500 255 327 255 329.500 256 C330.200 260 330.200 265.500 329.500 269.300 C327 270.300 323.500 270.300 321 269.300 C320.200 265.500 320.200 260 321 256 Z" fill="#b9312a"/>
<path d="M323.200 256.500 L323.200 269.500 M326.800 256.500 L326.800 269.500" stroke="#a02823" stroke-width="0.600"/>
<circle cx="308" cy="254.800" r="1.800" fill="#e27a69"/><circle cx="317.600" cy="258.400" r="1.700" fill="#e27a69"/><circle cx="310" cy="266" r="1.400" fill="#d96453"/>
<circle cx="326.600" cy="258.400" r="1.500" fill="#dc6a59"/><circle cx="326.600" cy="265" r="1" fill="#d05a4b"/>
<circle cx="337.600" cy="258" r="1.900" fill="#e27a69"/><circle cx="337.200" cy="267.400" r="1.300" fill="#d96453"/><circle cx="335.200" cy="250.600" r="1" fill="#e27a69"/>
</g>

<path d="M256.3 125.1 L314.6 111.6" fill="none" stroke="#2e8ef6" stroke-width="1.8" stroke-linejoin="round"/>
<path d="M314.700 112 L323.900 151.700" stroke="#8f98a8" stroke-width="0.600"/>
<path d="M314.7 112.0 L316.4 135.6 L318.3 162.0 L317.8 180.0 L312.9 265.0" fill="none" stroke="#2e8ef6" stroke-width="1.9" stroke-linejoin="round"/>
<path d="M270.8 297.5 L312.9 265.0" stroke="#fff" stroke-width="1.100"/><path d="M271.8 298.8 L302.2 273.8 L301.6 273.1 L269.7 296.2 Z" fill="#2e8ef6"/>
<path d="M270.8 297.5 L314.6 319.3" stroke="#fff" stroke-width="1.100"/><path d="M270.0 299.0 L303.0 314.1 L303.4 313.2 L271.5 296.0 Z" fill="#2e8ef6"/>
<path d="M270.8 297.5 L290.9 329.6" stroke="#fff" stroke-width="1.100"/><path d="M269.3 298.4 L285.2 321.5 L286.1 321.0 L272.2 296.6 Z" fill="#2e8ef6"/>
<path d="M270.8 297.5 L257.0 334.9" stroke="#fff" stroke-width="1.100"/><path d="M269.2 296.9 L260.1 325.0 L261.0 325.3 L272.3 298.1 Z" fill="#2e8ef6"/>
<path d="M270.8 297.5 L231.1 332.1" stroke="#fff" stroke-width="1.100"/><path d="M269.6 296.2 L241.1 322.7 L241.7 323.5 L271.9 298.8 Z" fill="#2e8ef6"/>
<path d="M231.1 332.1 L238.0 418.9" fill="none" stroke="#2e8ef6" stroke-width="1.8" stroke-linejoin="round"/>
<path d="M257.0 334.9 L259.8 415.2" fill="none" stroke="#2e8ef6" stroke-width="1.8" stroke-linejoin="round"/>
<path d="M290.9 329.6 L290.6 419.2" fill="none" stroke="#2e8ef6" stroke-width="1.8" stroke-linejoin="round"/>
<path d="M314.6 319.3 L311.4 409.6" fill="none" stroke="#2e8ef6" stroke-width="1.8" stroke-linejoin="round"/>
<rect x="231.8" y="352.7" width="3.600" height="3.600" rx="0.600" fill="#dcebfd"/><circle cx="233.6" cy="354.5" r="1.150" fill="#2e8ef6"/>
<rect x="234.0" y="395.6" width="3.600" height="3.600" rx="0.600" fill="#dcebfd"/><circle cx="235.8" cy="397.4" r="1.150" fill="#2e8ef6"/>
<circle cx="231.1" cy="332.1" r="3.100" fill="#a8cdf9" opacity="0.600"/><circle cx="231.1" cy="332.1" r="2.300" fill="#2e8ef6"/><circle cx="231.1" cy="332.1" r="0.800" fill="#5aa8fa"/>
<circle cx="238" cy="418.9" r="3.100" fill="#a8cdf9" opacity="0.600"/><circle cx="238" cy="418.9" r="2.300" fill="#2e8ef6"/><circle cx="238" cy="418.9" r="0.800" fill="#5aa8fa"/>
<rect x="255.8" y="353.6" width="3.600" height="3.600" rx="0.600" fill="#dcebfd"/><circle cx="257.6" cy="355.4" r="1.150" fill="#2e8ef6"/>
<rect x="257.3" y="393.2" width="3.600" height="3.600" rx="0.600" fill="#dcebfd"/><circle cx="259.1" cy="395.0" r="1.150" fill="#2e8ef6"/>
<circle cx="257" cy="334.9" r="3.100" fill="#a8cdf9" opacity="0.600"/><circle cx="257" cy="334.9" r="2.300" fill="#2e8ef6"/><circle cx="257" cy="334.9" r="0.800" fill="#5aa8fa"/>
<circle cx="259.8" cy="415.2" r="3.100" fill="#a8cdf9" opacity="0.600"/><circle cx="259.8" cy="415.2" r="2.300" fill="#2e8ef6"/><circle cx="259.8" cy="415.2" r="0.800" fill="#5aa8fa"/>
<rect x="289.1" y="350.5" width="3.600" height="3.600" rx="0.600" fill="#dcebfd"/><circle cx="290.9" cy="352.3" r="1.150" fill="#2e8ef6"/>
<rect x="289.1" y="395.6" width="3.600" height="3.600" rx="0.600" fill="#dcebfd"/><circle cx="290.9" cy="397.4" r="1.150" fill="#2e8ef6"/>
<circle cx="290.9" cy="329.6" r="3.100" fill="#a8cdf9" opacity="0.600"/><circle cx="290.9" cy="329.6" r="2.300" fill="#2e8ef6"/><circle cx="290.9" cy="329.6" r="0.800" fill="#5aa8fa"/>
<circle cx="290.6" cy="419.2" r="3.100" fill="#a8cdf9" opacity="0.600"/><circle cx="290.6" cy="419.2" r="2.300" fill="#2e8ef6"/><circle cx="290.6" cy="419.2" r="0.800" fill="#5aa8fa"/>
<rect x="312.1" y="339.6" width="3.600" height="3.600" rx="0.600" fill="#dcebfd"/><circle cx="313.9" cy="341.4" r="1.150" fill="#2e8ef6"/>
<rect x="310.9" y="386.0" width="3.600" height="3.600" rx="0.600" fill="#dcebfd"/><circle cx="312.7" cy="387.8" r="1.150" fill="#2e8ef6"/>
<circle cx="314.6" cy="319.3" r="3.100" fill="#a8cdf9" opacity="0.600"/><circle cx="314.6" cy="319.3" r="2.300" fill="#2e8ef6"/><circle cx="314.6" cy="319.3" r="0.800" fill="#5aa8fa"/>
<circle cx="311.4" cy="409.6" r="3.100" fill="#a8cdf9" opacity="0.600"/><circle cx="311.4" cy="409.6" r="2.300" fill="#2e8ef6"/><circle cx="311.4" cy="409.6" r="0.800" fill="#5aa8fa"/>
<rect x="268.8" y="119.9" width="3.600" height="3.600" rx="0.600" fill="#dcebfd"/><circle cx="270.6" cy="121.7" r="1.150" fill="#2e8ef6"/>
<rect x="298.0" y="113.5" width="3.600" height="3.600" rx="0.600" fill="#dcebfd"/><circle cx="299.8" cy="115.3" r="1.150" fill="#2e8ef6"/>
<circle cx="256.3" cy="125.1" r="3.100" fill="#a8cdf9" opacity="0.600"/><circle cx="256.3" cy="125.1" r="2.300" fill="#2e8ef6"/><circle cx="256.3" cy="125.1" r="0.800" fill="#5aa8fa"/>
<circle cx="314.7" cy="111.9" r="3.100" fill="#a8cdf9" opacity="0.600"/><circle cx="314.7" cy="111.9" r="2.300" fill="#2e8ef6"/><circle cx="314.7" cy="111.9" r="0.800" fill="#5aa8fa"/>
<rect x="322.1" y="149.9" width="3.600" height="3.600" rx="0.600" fill="#dcebfd"/><circle cx="323.9" cy="151.7" r="1.150" fill="#2e8ef6"/>
<rect x="311.5" y="224.8" width="3.600" height="3.600" rx="0.600" fill="#dcebfd"/><circle cx="313.3" cy="226.6" r="1.150" fill="#2e8ef6"/>
<circle cx="312.8" cy="264.8" r="3.100" fill="#a8cdf9" opacity="0.600"/><circle cx="312.8" cy="264.8" r="2.300" fill="#2e8ef6"/><circle cx="312.8" cy="264.8" r="0.800" fill="#5aa8fa"/>
<circle cx="182" cy="246.900" r="8.800" fill="none" stroke="#a4a4a4" stroke-width="0.600"/>
<circle cx="182" cy="246.900" r="6.300" fill="none" stroke="#efefef" stroke-width="1.200"/>
<path d="M180 250.500 L158.100 265.600" stroke="#f0161a" stroke-width="0.700"/>
<path d="M181.500 249.500 L177.200 252.600" stroke="#f0161a" stroke-width="2" stroke-linecap="round"/>
<path d="M175.600 254.500 C174.500 262 177 270 182.500 277.500" fill="none" stroke="#f0161a" stroke-width="2.300" stroke-linecap="round"/>
<rect x="156.500" y="264" width="3.200" height="3.200" fill="#f0161a"/>
<circle cx="182" cy="247.700" r="3.500" fill="#fbb512"/>

</svg>
<!--STAGE-->
<div class="a" style="left:182.300px;top:251.700px;width:87.900px;height:72.300px;background:#f1f1f1;box-shadow:0.800px 0.800px 1.800px rgba(0,0,0,0.550);border:0.500px solid #cfcfcf"></div>
<div class="t" style="left:199.300px;top:254.200px;color:#1a1a1a;font-size:6.150px">快速绑定</div>
<div class="t" style="left:199.300px;top:265.800px;color:#1a1a1a;font-size:6.150px">删除当前关节点</div>
<div class="a" style="left:197.500px;top:275.500px;width:71.500px;height:0.600px;background:#d2d2d2"></div>
<div class="t" style="left:199.300px;top:279.500px;color:#a3a3a3;font-size:6.150px">隐藏所有辅助线</div>
<div class="t" style="left:199.300px;top:291px;color:#a3a3a3;font-size:6.150px">清除所有辅助线</div>
<div class="t" style="left:199.300px;top:302.200px;color:#1a1a1a;font-size:6.150px">删除所有骨骼</div>
<div class="t" style="left:199.300px;top:313.300px;color:#1a1a1a;font-size:6.150px">删除所有图层</div>
<!--CTXMENU-->
<div class="a" id="bottomstrip"></div>
</div>
</body>
</html>
